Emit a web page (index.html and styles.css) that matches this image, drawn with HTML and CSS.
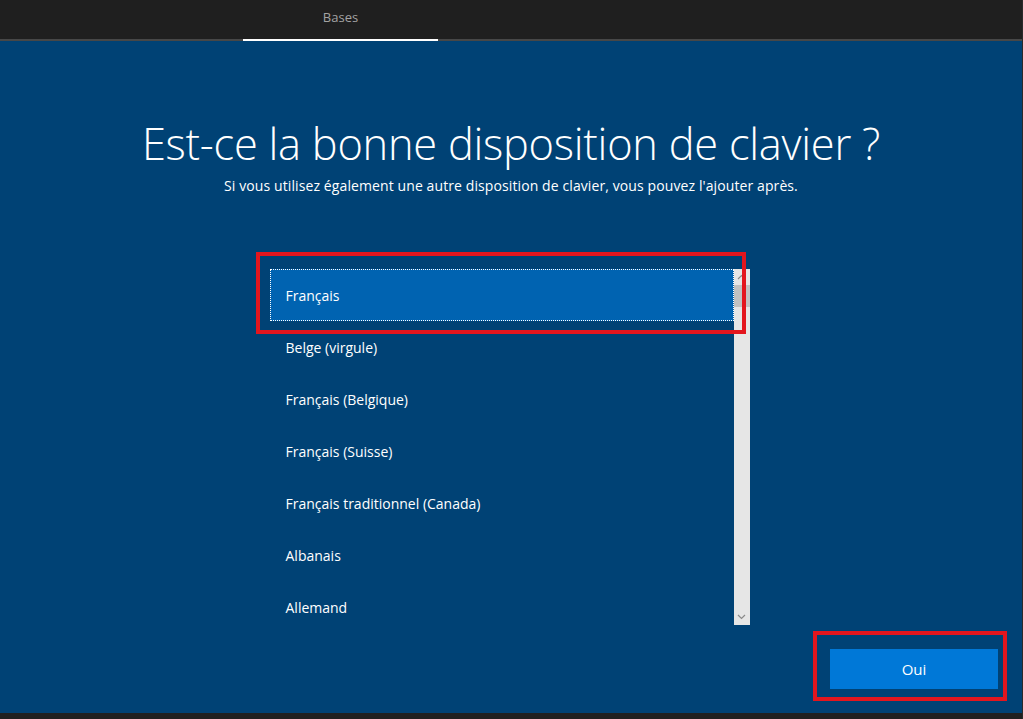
FILE: index.html
```html
<!DOCTYPE html>
<html lang="fr">
<head>
<meta charset="utf-8">
<title>Bases</title>
<link rel="stylesheet" href="styles.css">
</head>
<body>
<div class="screen">
  <header class="topbar">
    <nav class="tabs">
      <div class="tab active">Bases</div>
    </nav>
  </header>
  <main class="main">
    <h1 class="title">Est-ce la bonne disposition de clavier ?</h1>
    <p class="subtitle">Si vous utilisez également une autre disposition de clavier, vous pouvez l'ajouter après.</p>
    <div class="listwrap">
      <div class="highlight hl-list"></div>
      <div class="list">
        <ul class="items">
          <li class="item selected">Français</li>
          <li class="item">Belge (virgule)</li>
          <li class="item">Français (Belgique)</li>
          <li class="item">Français (Suisse)</li>
          <li class="item">Français traditionnel (Canada)</li>
          <li class="item">Albanais</li>
          <li class="item">Allemand</li>
        </ul>
        <div class="scrollbar">
          <div class="sb-arrow up">
            <svg width="9" height="6" viewBox="0 0 9 6"><path d="M1 5 L4.5 1.5 L8 5" fill="none" stroke="#8a8a8a" stroke-width="1.2"/></svg>
          </div>
          <div class="sb-thumb"></div>
          <div class="sb-track"></div>
          <div class="sb-arrow down">
            <svg width="9" height="6" viewBox="0 0 9 6"><path d="M1 1 L4.5 4.5 L8 1" fill="none" stroke="#8a8a8a" stroke-width="1.2"/></svg>
          </div>
        </div>
      </div>
    </div>
    <div class="footer">
      <div class="btnwrap">
        <div class="highlight hl-btn"></div>
        <button class="btn">Oui</button>
      </div>
    </div>
  </main>
  <div class="bottombar"></div>
</div>
</body>
</html>
```
FILE: styles.css
```css
* { box-sizing: border-box; }
html, body { margin: 0; padding: 0; }
body {
  width: 1023px;
  height: 719px;
  overflow: hidden;
  background: #1f1f1f;
  font-family: "Open Sans", "Noto Sans", "Liberation Sans", sans-serif;
  color: #fff;
}
.screen {
  display: flex;
  flex-direction: column;
  height: 719px;
  border-right: 1px solid #2a2a2a;
}
.topbar {
  height: 41px;
  background: #1f1f1f;
  border-bottom: 2px solid #474747;
}
.tabs {
  display: flex;
  padding-left: 243px;
  height: 39px;
}
.tab {
  width: 195px;
  text-align: center;
  font-size: 13px;
  color: #a3a3a3;
  padding-top: 8px;
  position: relative;
  height: 41px;
}
.tab.active::after {
  content: "";
  position: absolute;
  left: 0; right: 0; bottom: 0;
  height: 2px;
  background: #ffffff;
}
.main {
  height: 672px;
  background: #004275;
  display: flex;
  flex-direction: column;
  align-items: center;
}
.title {
  margin: 73px 0 0 0;
  font-weight: 300;
  font-size: 43.4px;
  line-height: 60px;
  letter-spacing: -0.25px;
  color: #fff;
  white-space: nowrap;
}
.subtitle {
  margin: 3px 0 0 0;
  font-size: 14px;
  line-height: 18px;
  letter-spacing: 0.1px;
  color: #fff;
}
.listwrap {
  position: relative;
  margin-top: 74px;
  margin-left: -3px;
}
.list {
  display: flex;
  width: 480px;
  height: 356px;
  overflow: hidden;
}
.items {
  list-style: none;
  margin: 0;
  padding: 0;
  width: 464px;
}
.item {
  height: 52px;
  display: flex;
  align-items: center;
  padding-left: 16px;
  font-size: 14px;
  color: #fff;
}
.item.selected {
  background: #0063b1;
  outline: 1px dotted #ffffff;
  outline-offset: -1px;
}
.scrollbar {
  width: 16px;
  background: #e6e6e6;
  display: flex;
  flex-direction: column;
}
.sb-arrow {
  height: 16px;
  display: flex;
  align-items: center;
  justify-content: center;
}
.sb-thumb {
  height: 22px;
  background: #c2c2c2;
}
.sb-track { flex: 1; }
.highlight {
  position: absolute;
  border: 4px solid #e3161e;
  pointer-events: none;
}
.hl-list {
  left: -14px;
  top: -17px;
  width: 490px;
  height: 82px;
  z-index: 2;
}
.footer {
  flex: 1;
  align-self: stretch;
  display: flex;
  justify-content: flex-end;
  align-items: flex-start;
  padding: 24px 24px 0 0;
}
.btnwrap { position: relative; }
.hl-btn {
  left: -17px;
  top: -18px;
  width: 194px;
  height: 70px;
}
.btn {
  width: 168px;
  height: 40px;
  border: none;
  background: #0078d7;
  color: #fff;
  font-family: "Open Sans", "Noto Sans", "Liberation Sans", sans-serif;
  font-size: 15px;
  padding: 0;
}
.bottombar {
  height: 6px;
  background: #202020;
}
```
